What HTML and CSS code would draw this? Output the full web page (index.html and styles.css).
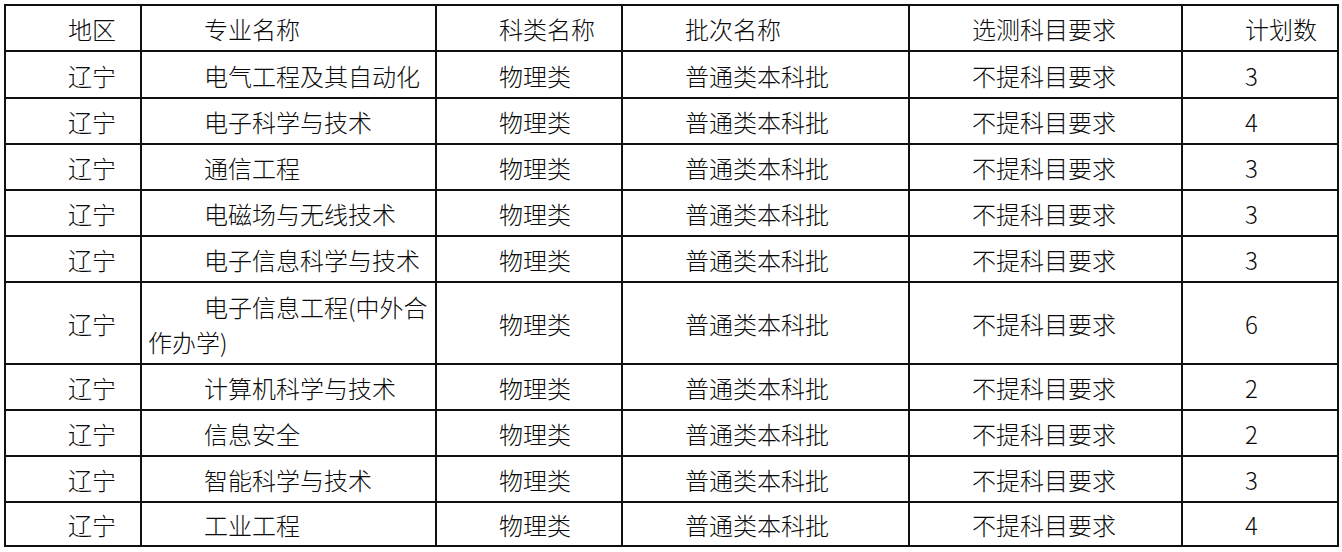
FILE: index.html
```html
<!DOCTYPE html>
<html lang="zh-CN">
<head>
<meta charset="utf-8">
<title>招生计划</title>
<link rel="stylesheet" href="styles.css">
</head>
<body>
<table class="plan">
  <colgroup>
    <col class="c-region">
    <col class="c-major">
    <col class="c-subject">
    <col class="c-batch">
    <col class="c-require">
    <col class="c-count">
  </colgroup>
  <tbody>
    <tr class="row row-head"><td>地区</td><td>专业名称</td><td>科类名称</td><td>批次名称</td><td>选测科目要求</td><td>计划数</td></tr>
    <tr class="row row-first"><td>辽宁</td><td>电气工程及其自动化</td><td>物理类</td><td>普通类本科批</td><td>不提科目要求</td><td>3</td></tr>
    <tr class="row"><td>辽宁</td><td>电子科学与技术</td><td>物理类</td><td>普通类本科批</td><td>不提科目要求</td><td>4</td></tr>
    <tr class="row"><td>辽宁</td><td>通信工程</td><td>物理类</td><td>普通类本科批</td><td>不提科目要求</td><td>3</td></tr>
    <tr class="row"><td>辽宁</td><td>电磁场与无线技术</td><td>物理类</td><td>普通类本科批</td><td>不提科目要求</td><td>3</td></tr>
    <tr class="row"><td>辽宁</td><td>电子信息科学与技术</td><td>物理类</td><td>普通类本科批</td><td>不提科目要求</td><td>3</td></tr>
    <tr class="row row-double"><td>辽宁</td><td>电子信息工程(中外合作办学)</td><td>物理类</td><td>普通类本科批</td><td>不提科目要求</td><td>6</td></tr>
    <tr class="row"><td>辽宁</td><td>计算机科学与技术</td><td>物理类</td><td>普通类本科批</td><td>不提科目要求</td><td>2</td></tr>
    <tr class="row"><td>辽宁</td><td>信息安全</td><td>物理类</td><td>普通类本科批</td><td>不提科目要求</td><td>2</td></tr>
    <tr class="row"><td>辽宁</td><td>智能科学与技术</td><td>物理类</td><td>普通类本科批</td><td>不提科目要求</td><td>3</td></tr>
    <tr class="row row-last"><td>辽宁</td><td>工业工程</td><td>物理类</td><td>普通类本科批</td><td>不提科目要求</td><td>4</td></tr>
  </tbody>
</table>
</body>
</html>
```

FILE: styles.css
```css
html, body {
  margin: 0;
  padding: 0;
  background: #ffffff;
}

body {
  padding: 4px 0 0 4px;
  font-family: "Noto Sans CJK SC", "Noto Sans", sans-serif;
  color: #0a0a0a;
}

.plan {
  border-collapse: separate;
  border-spacing: 0;
  table-layout: fixed;
  width: 1335px;
  border-left: 2px solid #111111;
  border-top: 2px solid #111111;
}

.c-region { width: 136px; }
.c-major { width: 295px; }
.c-subject { width: 186px; }
.c-batch { width: 287px; }
.c-require { width: 273px; }
.c-count { width: 156px; }

.plan td {
  box-sizing: border-box;
  border-right: 2px solid #111111;
  border-bottom: 2px solid #111111;
  padding: 1px 2px 0 6px;
  text-indent: 56px;
  font-size: 24px;
  font-weight: 300;
  line-height: 35px;
  vertical-align: middle;
  text-align: left;
  white-space: normal;
}

.row { height: 46px; }
.row-first { height: 47px; }
.row-double { height: 82px; }
.row-last { height: 44px; }
```
